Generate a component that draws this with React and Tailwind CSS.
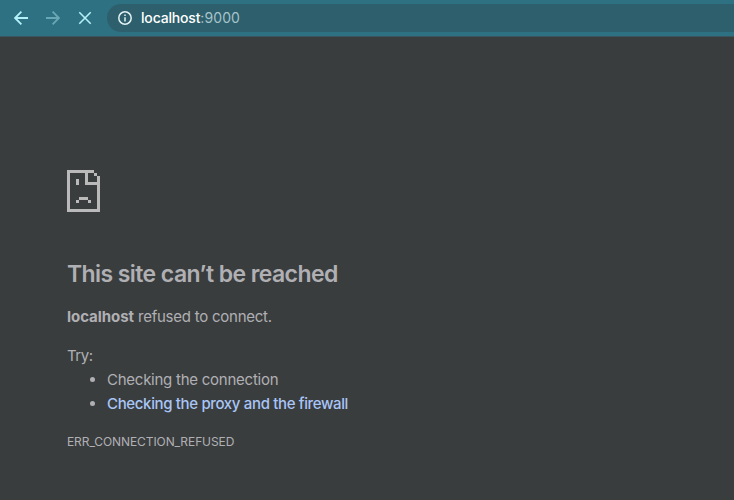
function Toolbar() {
  return (
    <header className="flex h-[37px] items-start border-b border-[#3a5560] bg-[#2d7182] pt-1">
      <div className="flex h-7 w-[107px] shrink-0 items-center gap-[18px] pl-[14px]">
        <svg className="size-[14px] shrink-0 text-[#b4f0f7]" viewBox="0 0 14 14" fill="none" stroke="currentColor" strokeWidth="1.8">
          <path d="M14 7H1.2M7.4.7 1.1 7l6.3 6.3" />
        </svg>
        <svg className="size-[14px] shrink-0 text-[#6aa7b4]" viewBox="0 0 14 14" fill="none" stroke="currentColor" strokeWidth="1.8">
          <path d="M0 7h12.8M6.6.7 12.9 7l-6.3 6.3" />
        </svg>
        <svg className="size-[14px] shrink-0 text-[#b4f0f7]" viewBox="0 0 14 14" fill="none" stroke="currentColor" strokeWidth="1.6">
          <path d="m1.3 1.3 11.4 11.4M12.7 1.3 1.3 12.7" />
        </svg>
      </div>
      <div className="flex h-7 flex-1 items-center rounded-l-full bg-[#2e5f6c] pl-[11px]">
        <svg className="size-[14px] shrink-0" viewBox="0 0 14 14" fill="none" stroke="#e3f2f5" strokeWidth="1.5">
          <circle cx="7" cy="7" r="6.2" />
          <path d="M7 6.2v4.2M7 3.4v1.5" />
        </svg>
        <span className="ml-[9px] text-[14px] leading-5 tracking-[0.1px] whitespace-nowrap text-[#a5c3cb]">
          <span className="font-medium tracking-[-0.17px] text-white">localhost</span>:9000
        </span>
      </div>
    </header>
  );
}

function SadPage() {
  return (
    <svg className="h-[42px] w-[33px]" viewBox="0 0 11 14" fill="#bababa" shapeRendering="crispEdges">
      <path d="M0 0h9v1h1v1h1v12H0V0zM1 1v12h9V5H6V1zM7 1v3h3V2H9V1z" fillRule="evenodd" />
      <path d="M3 3h1v2H3zM4 9h3v1H4zM3 10h1v1H3zM7 10h1v1H7z" />
    </svg>
  );
}

export default function App() {
  return (
    <div className="flex h-[500px] w-[734px] flex-col overflow-hidden bg-[#3a3d3e] font-[Inter,sans-serif]">
      <Toolbar />
      <main className="flex-1 pt-[133px] pl-[67px] text-[15px] leading-6 text-[#b0b0b4]">
        <SadPage />
        <h1 className="mt-[47px] text-[23px] leading-[30px] font-semibold tracking-[-0.58px]">This site can’t be reached</h1>
        <p className="mt-4 tracking-[-0.24px]">
          <b className="font-bold tracking-[-0.05px]">localhost</b> refused to connect.
        </p>
        <p className="mt-[15px] tracking-[-0.5px]">Try:</p>
        <ul className="list-disc pl-10 tracking-[-0.25px]">
          <li>Checking the connection</li>
          <li className="font-medium tracking-[-0.35px]">
            <a className="text-[#a9c5f6]">Checking the proxy and the firewall</a>
          </li>
        </ul>
        <p className="mt-[14px] text-[12px] tracking-[-0.09px]">ERR_CONNECTION_REFUSED</p>
      </main>
    </div>
  );
}
